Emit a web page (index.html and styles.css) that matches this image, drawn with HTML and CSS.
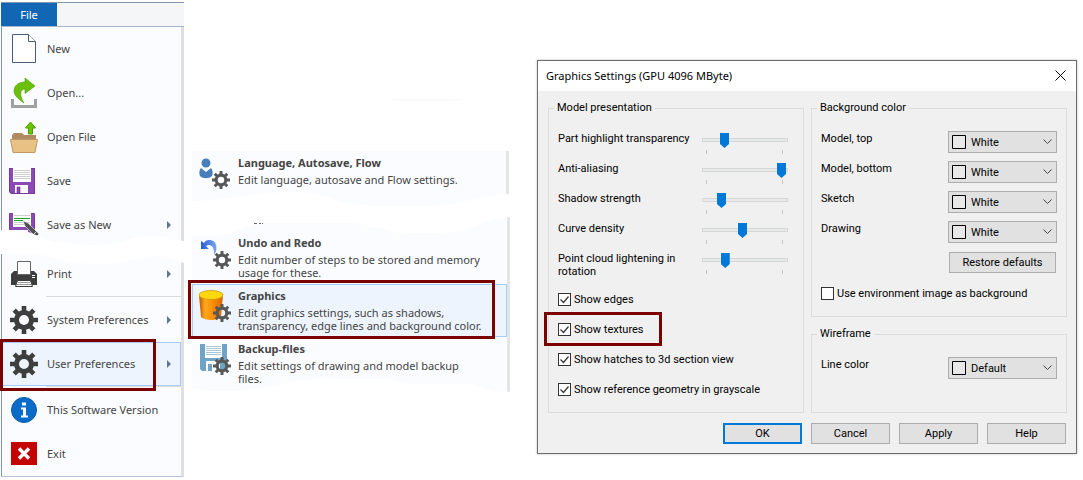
FILE: index.html
```html
<!DOCTYPE html>
<html lang="en">
<head>
    <meta charset="UTF-8">
    <meta name="viewport" content="width=device-width, initial-scale=1.0">
    <title>Graphics Settings</title>
    <link rel="stylesheet" href="styles.css">
</head>
<body>
    <!-- shared icon shapes -->
    <svg class="defs" width="0" height="0" aria-hidden="true">
        <symbol id="gear" viewBox="0 0 28 28">
            <circle cx="14" cy="14" r="7.5" fill="none" stroke="currentColor" stroke-width="5"/>
            <path d="M14 0v6M14 22v6M0 14h6M22 14h6M4.2 4.2l4 4M19.8 19.8l4 4M23.8 4.2l-4 4M8.2 19.8l-4 4" stroke="currentColor" stroke-width="4.600"/>
        </symbol>
    </svg>

    <div class="page">
        <!-- File menu -->
        <div class="menu">
            <div class="menu-header">
                <button class="tab">File</button>
            </div>
            <div class="menu-list">
                <button class="menu-item">
                    <svg class="icon" viewBox="0 0 28 32">
                        <path d="M2.500 1.500h16l7 7v21h-23z" fill="#fff" stroke="#4a6078"/>
                        <path d="M18.500 1.500v7h7" fill="#fff" stroke="#4a6078"/>
                    </svg>
                    <span>New</span>
                </button>
                <button class="menu-item">
                    <svg class="icon" viewBox="0 0 28 32">
                        <path d="M1 22h3v6h20v-6h3v9H1z" fill="#a0a0a0"/>
                        <path d="M15 1l10 8-10 7.500v-4.500c-5 0-6 6-1 14C8 22 4 18 4 14c0-5 4-9 11-9z" fill="#6cc00c" stroke="#4a9a08" stroke-width=".6"/>
                    </svg>
                    <span>Open...</span>
                </button>
                <button class="menu-item">
                    <svg class="icon" viewBox="0 0 28 32">
                        <path d="M2 18v-4l2-2h8l2 2h12v5H2z" fill="#b08a60"/>
                        <path d="M.5 18.500h27L25 31.500H3z" fill="#e8c285" stroke="#bd9868"/>
                        <path d="M20.500 1l5 6h-3v6h-4V7h-3z" fill="#6cc400" stroke="#4d9c00"/>
                    </svg>
                    <span>Open File</span>
                </button>
                <button class="menu-item">
                    <svg class="icon" viewBox="1 0 28 32">
                        <path d="M0 3h26v26H2l-2-2z" fill="#8a4bb4"/>
                        <path d="M.5 3.500h25v25H2.500l-2-2z" fill="none" stroke="#7438a0"/>
                        <path d="M4 3h18v14H4z" fill="#fff"/>
                        <path d="M5 5.500h16M5 7.500h16M5 9.500h16M5 11.500h16M5 13.500h16" stroke="#cfcfcf"/>
                        <path d="M6 20h13v8H6z" fill="#fff"/>
                        <path d="M8 22h3v6H8z" fill="#8a4bb4" stroke="#6a3096" stroke-width=".6"/>
                    </svg>
                    <span>Save</span>
                </button>
                <button class="menu-item">
                    <svg class="icon" viewBox="1 0 28 32">
                        <path d="M.5 4.500h25v25H2.500l-2-2z" fill="#8a4bb4" stroke="#7438a0"/>
                        <path d="M4 4h18v14H4z" fill="#fff"/>
                        <path d="M5 6.500h16M5 13.500h16M5 15.500h16" stroke="#cfcfcf"/>
                        <path d="M5 9.500h16M5 11.500h9" stroke="#18a818"/>
                        <path d="M6 21h13v8H6z" fill="#fff"/>
                        <path d="M8 23h3v6H8z" fill="#8a4bb4"/>
                        <path d="M14 12l5 2 11 11-3 3-11-11z" fill="#505050" stroke="#fff" stroke-width=".5"/>
                        <path d="M25 25l3-3" stroke="#ddd"/>
                    </svg>
                    <span>Save as New</span>
                    <i class="arrow"></i>
                </button>

                <!-- torn strip between the two halves of the menu -->
                <div class="tear">
                    <svg viewBox="0 0 184 36" preserveAspectRatio="none">
                        <path d="M-1 2H20C35 4 45 14 62 15S95 19 115 15S135 8 150 8S170 13 184 13V35C178 34 170 28 158 28S125 36 95 36S50 26 30 26H-1z" fill="#fff"/>
                    </svg>
                </div>

                <button class="menu-item">
                    <svg class="icon" viewBox="0 0 28 32">
                        <path d="M4 13h20l3 3v11H1V16z" fill="#3c3c3c"/>
                        <path d="M7.500 3.500h13v13h-13z" fill="#fff" stroke="#666"/>
                        <path d="M7.500 22.500h13l2 6h-17z" fill="#fff" stroke="#3c3c3c"/>
                        <path d="M8 24.500h12M7 26.500h14" stroke="#999"/>
                        <path d="M22 17h3v1h-3zM22 19h3v1h-3z" fill="#fff"/>
                    </svg>
                    <span>Print</span>
                    <i class="arrow"></i>
                </button>
                <hr class="separator">
                <button class="menu-item">
                    <svg class="icon dark" viewBox="0 0 28 32"><use href="#gear" y="2" width="28" height="28"/></svg>
                    <span>System Preferences</span>
                    <i class="arrow"></i>
                </button>
                <button class="menu-item selected">
                    <svg class="icon dark" viewBox="0 0 28 32"><use href="#gear" y="2" width="28" height="28"/></svg>
                    <span>User Preferences</span>
                    <i class="arrow"></i>
                    <i class="mark mark-menu"></i>
                </button>
                <hr class="separator">
                <button class="menu-item">
                    <svg class="icon" viewBox="0 0 28 32">
                        <circle cx="14" cy="16" r="12.500" fill="#0a6cc8" stroke="#0758a8"/>
                        <path d="M12 8.500h4v3h-4zM11 13.500h5v8h2v2h-7v-2h2v-6h-2z" fill="#fff"/>
                    </svg>
                    <span>This Software Version</span>
                </button>
                <button class="menu-item">
                    <svg class="icon" viewBox="0 0 28 32">
                        <path d="M1 4h26v23H1z" fill="#c40404"/>
                        <path d="M9 10.500l10 10M19 10.500l-10 10" stroke="#fff" stroke-width="3.500"/>
                    </svg>
                    <span>Exit</span>
                </button>
            </div>
        </div>

        <!-- User Preferences submenu -->
        <div class="submenu">
            <svg class="sliver" viewBox="0 0 320 3" preserveAspectRatio="none">
                <path d="M197 0H275L262 2H210z" fill="#f9fafc"/>
            </svg>
            <div class="panel panel-top">
                <button class="sub-item">
                    <svg class="sub-icon" viewBox="0 0 32 36">
                        <circle cx="7" cy="6" r="4.500" fill="#4a7ebb"/>
                        <path d="M2 11l5 4 5-4c2 2 2 6 1 8-3 3-9 3-12 0-1-2-1-6 1-8z" fill="#4a7ebb"/>
                        <use href="#gear" x="13" y="14" width="18" height="18"/>
                    </svg>
                    <span class="sub-text">
                        <b>Language, Autosave, Flow</b>
                        <span>Edit language, autosave and Flow settings.</span>
                    </span>
                </button>
                <svg class="edge edge-bottom" viewBox="0 0 318 15" preserveAspectRatio="none">
                    <path d="M0 10C40 9 70 0 103 1S150 15 180 15H245C270 12 290 5 318 3V16H0z" fill="#fff"/>
                </svg>
            </div>
            <div class="panel panel-main">
                <svg class="edge edge-top" viewBox="0 0 318 20" preserveAspectRatio="none">
                    <path d="M0 0H318C300 0 275 16 250 16H212C195 16 180 6 158 6H70C50 8 45 18 20 19H0z" fill="#fff"/>
                    <path d="M62 6.500h3M67 6.500h2M70 6.500h1" stroke="#666"/>
                </svg>
                <button class="sub-item">
                    <svg class="sub-icon" viewBox="0 0 32 36">
                        <defs>
                            <linearGradient id="undo">
                                <stop offset="0" stop-color="#2a5cd4"/>
                                <stop offset="1" stop-color="#7aa6ee"/>
                            </linearGradient>
                        </defs>
                        <path d="M2 4v8h8l-3-3c4-3 9 0 8 9 5-7 2-16-5-15-2 0-4 1-5 3z" fill="url(#undo)"/>
                        <use href="#gear" x="14" y="14" width="18" height="18"/>
                    </svg>
                    <span class="sub-text">
                        <b>Undo and Redo</b>
                        <span>Edit number of steps to be stored and memory usage for these.</span>
                    </span>
                </button>
                <button class="sub-item selected">
                    <svg class="sub-icon" viewBox="0 0 32 36">
                        <defs>
                            <linearGradient id="can">
                                <stop offset="0" stop-color="#b85400"/>
                                <stop offset=".25" stop-color="#ffa820"/>
                                <stop offset=".5" stop-color="#ff9408"/>
                                <stop offset="1" stop-color="#d86800"/>
                            </linearGradient>
                        </defs>
                        <path d="M0 5l2 22c4 4 16 4 20 0l2-22z" fill="url(#can)"/>
                        <ellipse cx="12" cy="5" rx="12" ry="4.500" fill="#ffd810" stroke="#c89000" stroke-width=".7"/>
                        <use href="#gear" x="14" y="14" width="18" height="18"/>
                    </svg>
                    <span class="sub-text">
                        <b>Graphics</b>
                        <span>Edit graphics settings, such as shadows, transparency, edge lines and background color.</span>
                    </span>
                    <i class="mark mark-sub"></i>
                </button>
                <button class="sub-item">
                    <svg class="sub-icon" viewBox="0 0 32 36">
                        <path d="M1 1h27v27H3l-2-2z" fill="#6fa3c8"/>
                        <path d="M6 1h17v14H6z" fill="#fff"/>
                        <path d="M7 3.500h15M7 5.500h15M7 7.500h15M7 9.500h15M7 11.500h15" stroke="#a8c4d8"/>
                        <path d="M7 18h14v10H7z" fill="#fff"/>
                        <path d="M9 21h4v7H9z" fill="#6fa3c8"/>
                        <use href="#gear" x="14" y="14" width="18" height="18"/>
                    </svg>
                    <span class="sub-text">
                        <b>Backup-files</b>
                        <span>Edit settings of drawing and model backup files.</span>
                    </span>
                </button>
                <svg class="edge edge-bottom" viewBox="0 0 318 12" preserveAspectRatio="none">
                    <path d="M0 9C30 12 60 11 90 5S130 1 160 1H198C210 5 220 5 240 5H283L300 11H318V13H0z" fill="#fff"/>
                </svg>
            </div>
        </div>

        <!-- Graphics Settings dialog -->
        <form class="dialog">
            <div class="title-bar">
                <span>Graphics Settings (GPU 4096 MByte)</span>
                <button type="button" class="close" aria-label="Close">
                    <svg viewBox="0 0 11 11"><path d="M.5 .5l10 10M10.500 .5l-10 10" stroke="#000"/></svg>
                </button>
            </div>
            <div class="dialog-body">
                <div class="columns">
                    <fieldset>
                        <legend>Model presentation</legend>
                        <div class="row">
                            <label for="highlight">Part highlight transparency</label>
                            <input type="range" id="highlight" value="24">
                        </div>
                        <div class="row">
                            <label for="aliasing">Anti-aliasing</label>
                            <input type="range" id="aliasing" value="100">
                        </div>
                        <div class="row">
                            <label for="shadow">Shadow strength</label>
                            <input type="range" id="shadow" value="20">
                        </div>
                        <div class="row">
                            <label for="curve">Curve density</label>
                            <input type="range" id="curve" value="48">
                        </div>
                        <div class="row">
                            <label for="cloud">Point cloud lightening in rotation</label>
                            <input type="range" id="cloud" value="25">
                        </div>
                        <div class="checks">
                            <label class="check"><input type="checkbox" checked>Show edges</label>
                            <label class="check"><input type="checkbox" checked>Show textures<i class="mark mark-check"></i></label>
                            <label class="check"><input type="checkbox" checked>Show hatches to 3d section view</label>
                            <label class="check"><input type="checkbox" checked>Show reference geometry in grayscale</label>
                        </div>
                    </fieldset>
                    <div class="right">
                        <fieldset>
                            <legend>Background color</legend>
                            <div class="row">
                                <label for="top">Model, top</label>
                                <select id="top"><option>White</option></select>
                            </div>
                            <div class="row">
                                <label for="bottom">Model, bottom</label>
                                <select id="bottom"><option>White</option></select>
                            </div>
                            <div class="row">
                                <label for="sketch">Sketch</label>
                                <select id="sketch"><option>White</option></select>
                            </div>
                            <div class="row">
                                <label for="drawing">Drawing</label>
                                <select id="drawing"><option>White</option></select>
                            </div>
                            <div class="restore">
                                <button type="button" class="btn btn-wide">Restore defaults</button>
                            </div>
                            <label class="check"><input type="checkbox">Use environment image as background</label>
                        </fieldset>
                        <fieldset class="wireframe">
                            <legend>Wireframe</legend>
                            <div class="row">
                                <label for="line">Line color</label>
                                <select id="line"><option>Default</option></select>
                            </div>
                        </fieldset>
                    </div>
                </div>
                <div class="buttons">
                    <button type="button" class="btn btn-ok">OK</button>
                    <button type="button" class="btn">Cancel</button>
                    <button type="button" class="btn">Apply</button>
                    <button type="button" class="btn">Help</button>
                </div>
            </div>
        </form>
    </div>
</body>
</html>
```

FILE: styles.css
```css
* {
    box-sizing: border-box;
}
body {
    margin: 0;
    background-color: #fff;
    font-family: "Noto Sans", "Open Sans", sans-serif;
    font-size: 11px;
    color: #444;
}
button, select, input {
    font: inherit;
    color: inherit;
    margin: 0;
}
.defs {
    position: absolute;
}
.page {
    display: grid;
    grid-template-columns: 184fr 320fr 561fr;
    column-gap: 6px;
    align-items: start;
    padding: 2px 6px 0 0;
}

/* red frames around the important items */
.mark {
    position: absolute;
    border: 3px solid #7b0000;
    pointer-events: none;
}

/* File menu */
.menu {
    margin-left: 1px;
}
.menu-header {
    border-top: 1px solid #8296ad;
    border-bottom: 1px solid #a5b5cf;
    background-color: #f5f6f8;
    height: 25px;
}
.tab {
    display: block;
    width: 56px;
    height: 23px;
    padding: 0;
    border: none;
    background-color: #1267b4;
    color: #fff;
}
.menu-list {
    border-left: 1px solid #8296ad;
    border-right: 3px solid #e0e0e2;
    border-bottom: 1px solid #b4c4dc;
    background-color: #fbfcff;
}
.menu-item {
    position: relative;
    display: flex;
    align-items: center;
    gap: 9px;
    width: 100%;
    height: 44px;
    padding: 0 9px 0 7px;
    border: 1px solid transparent;
    background: none;
    text-align: left;
    white-space: nowrap;
}
.menu-item span {
    padding-bottom: 2px;
}
.selected {
    background-color: #edf4fd;
    border-color: #a5cdf8;
}
.icon {
    flex: none;
    width: 28px;
    height: 32px;
    overflow: visible;
}
.dark {
    color: #3e3e3e;
}
.arrow {
    margin-left: auto;
    border: 4px solid transparent;
    border-left-color: #5c7796;
    border-right: none;
}
.separator {
    height: 1px;
    margin: 0 0 1px 44px;
    border: none;
    background-color: #dcdcde;
}
.tear {
    position: relative;
    z-index: 1;
    height: 5px;
}
.tear svg {
    position: absolute;
    left: -2px;
    top: -19px;
    width: calc(100% + 5px);
    height: 36px;
}
.mark-menu {
    top: -4px;
    left: -3px;
    right: 24px;
    bottom: -6px;
}

/* submenu */
.submenu {
    padding: 97px 0 0 2px;
}
.sliver {
    display: block;
    width: 100%;
    height: 3px;
}
.panel {
    position: relative;
    border-right: 3px solid #e4e5e7;
    background-color: #fbfcff;
}
.panel-top {
    height: 55px;
    margin-top: 49px;
    margin-right: 1px;
}
.panel-main {
    margin-top: 11px;
    padding: 14px 0 3px;
}
.edge {
    position: absolute;
    left: 0;
    width: calc(100% + 3px);
}
.edge-top {
    top: 0;
    height: 20px;
}
.edge-bottom {
    bottom: 0;
    height: 15px;
}
.sub-item {
    position: relative;
    display: flex;
    align-items: flex-start;
    gap: 7px;
    width: 100%;
    height: 53px;
    padding: 3px 0 0 6px;
    border: 1px solid transparent;
    background: none;
    text-align: left;
}
.sub-item.selected {
    background-color: #edf4fd;
    border-color: #a5cdf8;
}
.sub-icon {
    flex: none;
    width: 32px;
    height: 36px;
    margin-top: 2px;
    color: #585858;
}
.sub-text b {
    display: block;
    line-height: 16px;
    margin-bottom: 2px;
}
.sub-text span {
    display: block;
    max-width: 246px;
    line-height: 13px;
}
.mark-sub {
    top: -5px;
    left: -5px;
    right: 11px;
    bottom: -3px;
}

/* dialog */
.dialog {
    margin: 58px 0 0 21px;
    border: 1px solid #6e6e6e;
    background-color: #f0f0f0;
    box-shadow: 0 0 2px rgba(0,0,0,0.3);
    font-family: Roboto, "Liberation Sans", sans-serif;
    font-size: 11px;
    color: #000;
}
.title-bar {
    display: flex;
    align-items: center;
    justify-content: space-between;
    height: 30px;
    padding: 0 10px 2px 8px;
    background-color: #fff;
    font-family: "Noto Sans", "Open Sans", sans-serif;
}
.close {
    width: 11px;
    height: 11px;
    padding: 0;
    border: none;
    background: none;
}
.close svg {
    display: block;
}
.dialog-body {
    padding: 10px 9px 9px 10px;
}
.columns {
    display: grid;
    grid-template-columns: 1fr 1fr;
    gap: 7px;
}
.right {
    display: flex;
    flex-direction: column;
    gap: 10px;
}
fieldset {
    min-width: 0;
    margin: 0;
    padding: 16px 9px 8px;
    border: 1px solid #dcdcdc;
}
.wireframe {
    flex: 1;
}
legend {
    margin-left: -4px;
    padding: 0 3px;
    line-height: 14px;
}
.row {
    display: flex;
    justify-content: space-between;
    align-items: flex-start;
    height: 30px;
}
.row label {
    max-width: 136px;
    padding-top: 1px;
    line-height: 13px;
}
input[type="range"] {
    appearance: none;
    width: 86px;
    height: 24px;
    margin-right: 6px;
    padding-bottom: 6px;
    background:
        linear-gradient(#c4c4c4, #c4c4c4) 4px 19px / 1px 4px no-repeat,
        linear-gradient(#c4c4c4, #c4c4c4) 80px 19px / 1px 4px no-repeat;
}
input[type="range"]::-webkit-slider-runnable-track {
    height: 4px;
    border: 1px solid #d6d6d6;
    background-color: #e7eaea;
}
input[type="range"]::-webkit-slider-thumb {
    appearance: none;
    width: 9px;
    height: 15px;
    margin: -6px -1px 0;
    background-color: #0078d7;
    clip-path: polygon(0 0, 100% 0, 100% 11px, 50% 100%, 0 11px);
}
.checks {
    margin-top: 3px;
}
.check {
    position: relative;
    display: flex;
    align-items: center;
    gap: 3px;
    height: 30px;
}
input[type="checkbox"] {
    appearance: none;
    width: 13px;
    height: 13px;
    border: 1px solid #333;
    background-color: #fff;
}
input[type="checkbox"]:checked {
    background-image: url("data:image/svg+xml,%3Csvg xmlns='http://www.w3.org/2000/svg' viewBox='0 0 11 11'%3E%3Cpath d='M1.500 5.500l3 3 5-6' fill='none' stroke='%23333' stroke-width='1.200'/%3E%3C/svg%3E");
}
.mark-check {
    top: -2px;
    left: -14px;
    width: 118px;
    height: 34px;
}
select {
    appearance: none;
    width: 109px;
    height: 22px;
    padding: 0 20px 0 22px;
    border: 1px solid #adadad;
    border-radius: 0;
    background:
        url("data:image/svg+xml,%3Csvg xmlns='http://www.w3.org/2000/svg' width='14' height='14'%3E%3Cpath d='M.5 .5h13v13h-13z' fill='%23e8e8e8' stroke='%23000'/%3E%3C/svg%3E") 3px 3px no-repeat,
        url("data:image/svg+xml,%3Csvg xmlns='http://www.w3.org/2000/svg' width='9' height='6'%3E%3Cpath d='M.5 .5l4 4 4-4' fill='none' stroke='%23444'/%3E%3C/svg%3E") right 4px center no-repeat,
        #e1e1e1;
}
.restore {
    padding: 1px 1px 5px;
    text-align: right;
}
.btn {
    width: 79px;
    height: 21px;
    padding: 0;
    border: 1px solid #adadad;
    background-color: #e1e1e1;
}
.btn-wide {
    display: inline-block;
    width: 107px;
    vertical-align: top;
}
.btn-ok {
    border: 2px solid #0078d7;
}
.buttons {
    display: flex;
    justify-content: flex-end;
    gap: 9px;
    margin: 10px 1px 0 0;
}
```
